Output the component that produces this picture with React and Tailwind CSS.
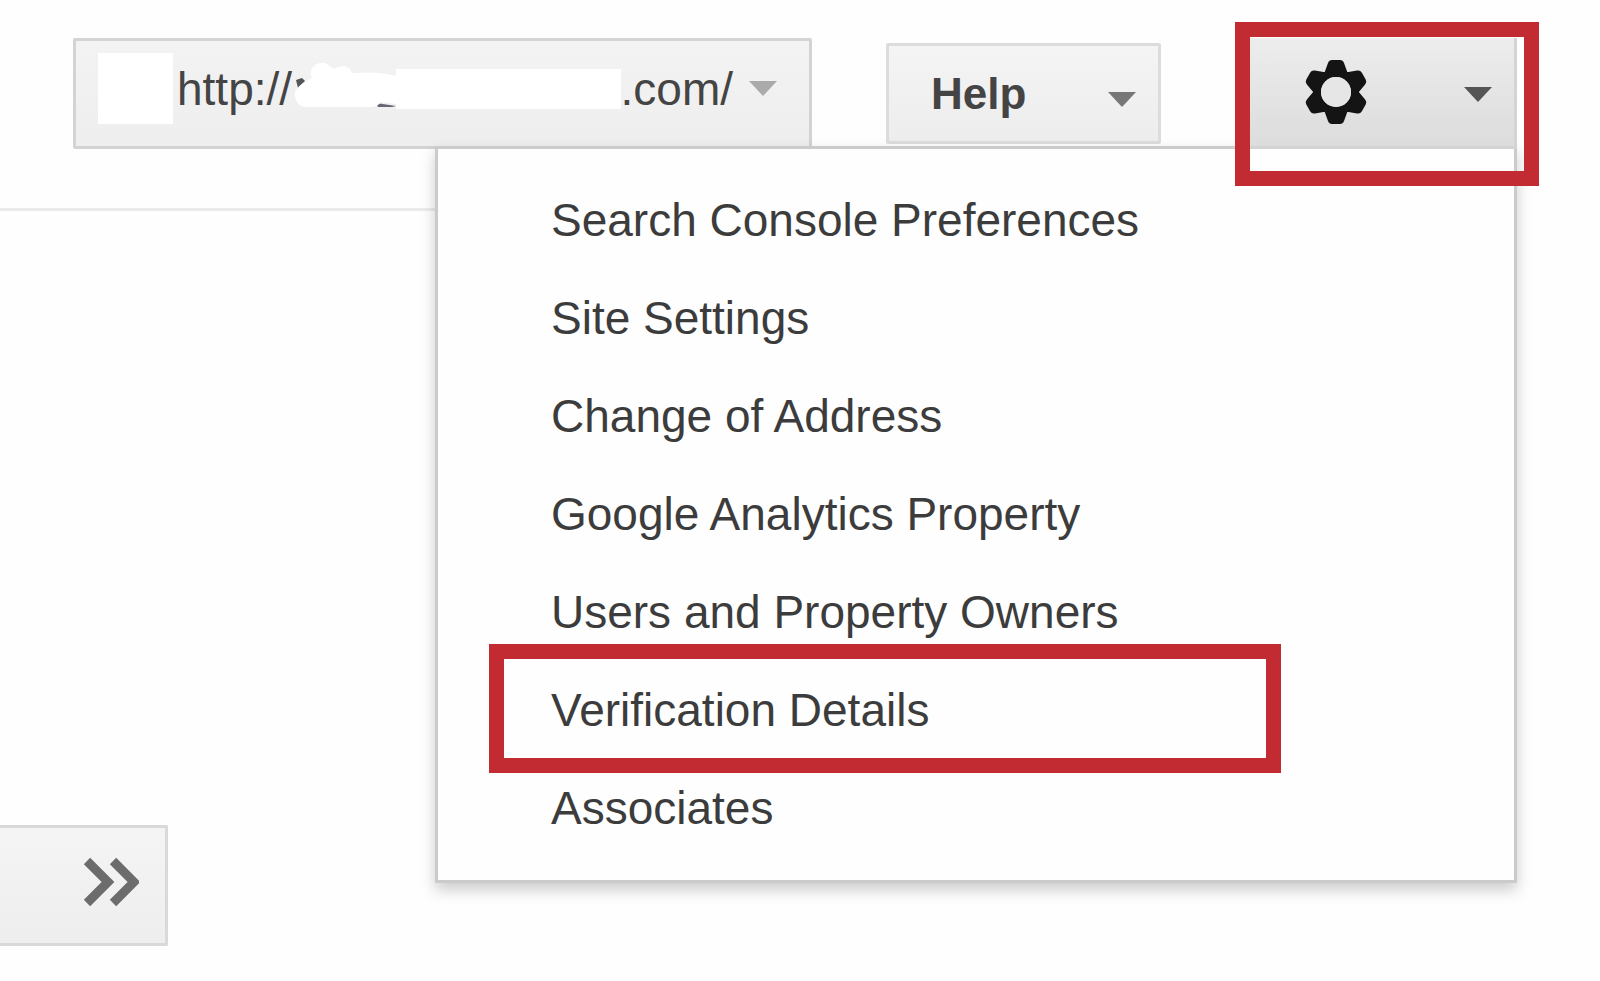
import React, { useState } from "react";

const menuItems = [
  { name: "Search Console Preferences", href: "#preferences" },
  { name: "Site Settings", href: "#settings" },
  { name: "Change of Address", href: "#address" },
  { name: "Google Analytics Property", href: "#analytics" },
  { name: "Users and Property Owners", href: "#users" },
  { name: "Verification Details", href: "#verification", marked: true },
  { name: "Associates", href: "#associates" },
];

function Caret({ className }) {
  return (
    <svg viewBox="0 0 28 15" className={`h-[15px] w-7 shrink-0 ${className}`} aria-hidden="true">
      <path d="M0 0H28L14 15Z" fill="currentColor" />
    </svg>
  );
}

function GearIcon() {
  return (
    <svg viewBox="-32 -32 64 64" className="h-16 w-16" aria-hidden="true">
      <g fill="#141414">
        {[0, 60, 120, 180, 240, 300].map((angle) => (
          <path
            key={angle}
            d="M-12 -18L-8 -29Q-7 -32 -4 -32H4Q7 -32 8 -29L12 -18Z"
            transform={`rotate(${angle})`}
          />
        ))}
      </g>
      <circle r="19" fill="none" stroke="#141414" strokeWidth="8" />
      <circle r="15" fill="#e6e6e6" />
    </svg>
  );
}

/** Red rectangle that points at a control */
function Marker({ className }) {
  return (
    <span
      className={`pointer-events-none absolute border-[15px] border-[#c12b31] ${className}`}
    />
  );
}

/** Property picker, the domain is wiped out */
function SitePicker() {
  return (
    <button
      type="button"
      className="mt-4 flex h-[111px] flex-1 items-center rounded-xs border-3 border-[#d3d3d3] bg-linear-to-b from-[#f3f3f3] to-[#eeeeee] pr-8 pb-2.5 pl-[22px] text-[46px] leading-[52px] text-[#444]"
    >
      <span className="mr-1 h-[71px] w-[75px] shrink-0 bg-white" />
      <span>http://</span>
      <span className="-ml-2 flex flex-1 items-center">
        <svg viewBox="0 0 112 56" className="h-14 w-28 shrink-0" aria-hidden="true">
          <path d="M12 19L18 17L21 20L14 27Z" fill="#555" />
          <path d="M92 42L112 45L108 46H94Z" fill="#667" />
          <path
            d="M11 36C9 30 14 24 28 17C24 9 30 2 38 2C43 1 46 6 50 8C57 4 65 4 68 12C82 11 98 11 112 15V43L97 41C93 46 89 46 85 46H21C15 45 12 41 11 36Z"
            fill="#fff"
          />
        </svg>
        <span className="h-10 flex-1 bg-white" />
      </span>
      <span>.com/</span>
      <Caret className="ml-4 text-[#aaa]" />
    </button>
  );
}

function HelpButton() {
  return (
    <button
      type="button"
      className="mx-[74px] mt-[21px] flex h-[101px] w-[275px] items-center justify-between rounded-xs border-3 border-[#dcdcdc] bg-linear-to-b from-[#f4f4f4] to-[#ededed] pr-[22px] pl-[42px] text-[44px] leading-[52px] font-bold text-[#444]"
    >
      Help
      <Caret className="mt-3 text-[#777]" />
    </button>
  );
}

function SettingsMenu() {
  const [open, setOpen] = useState(true);

  return (
    <div className="relative mr-[61px] h-[164px] w-[304px]">
      <button
        type="button"
        aria-label="Settings"
        aria-expanded={open}
        onClick={() => setOpen(!open)}
        className="relative z-20 mt-4 mr-[22px] ml-[15px] flex h-[111px] w-[267px] items-center justify-between border-r-3 border-b-3 border-[#d4d4d4] bg-linear-to-b from-[#ededed] to-[#dcdcdc] pr-[22px] pl-[54px]"
      >
        <GearIcon />
        <Caret className="mt-1 text-[#555]" />
      </button>

      {open && (
        <nav className="absolute top-[124px] right-[22px] z-10 w-[1082px] border-3 border-[#cbcbcb] bg-[#fefefe] pt-[22px] pb-[23px] shadow-[0_7px_14px_rgba(0,0,0,0.2)]">
          <ul>
            {menuItems.map((item) => (
              <li key={item.name} className="relative">
                <a
                  href={item.href}
                  className="block pl-[113px] text-[46px] leading-[98px] text-[#3c3c3c]"
                >
                  {item.name}
                </a>
                {item.marked && (
                  <Marker className="-top-[17px] right-[233px] -bottom-[14px] left-[51px]" />
                )}
              </li>
            ))}
          </ul>
        </nav>
      )}

      <Marker className="inset-0 z-30" />
    </div>
  );
}

export default function App() {
  return (
    <div className="min-h-screen w-full bg-[#fefefe] font-['Liberation_Sans',Arial,sans-serif]">
      <header className="flex items-start pt-[22px] pl-[73px]">
        <SitePicker />
        <HelpButton />
        <SettingsMenu />
      </header>

      <hr className="mt-[22px] w-[436px] border-t-3 border-[#ebebeb]" />

      <main className="pt-[614px]">
        <button
          type="button"
          aria-label="Expand sidebar"
          className="flex h-[121px] w-[168px] items-center justify-end rounded-r-xs border-3 border-l-0 border-[#d9d9d9] bg-linear-to-b from-[#f4f4f4] to-[#eeeeee] pr-[26px] pb-2"
        >
          <svg viewBox="0 0 56 52" className="h-[52px] w-14" aria-hidden="true">
            <path
              d="M4 5L25 26L4 47M30 5L51 26L30 47"
              fill="none"
              stroke="#6c6c6c"
              strokeWidth="9"
            />
          </svg>
        </button>
      </main>
    </div>
  );
}
